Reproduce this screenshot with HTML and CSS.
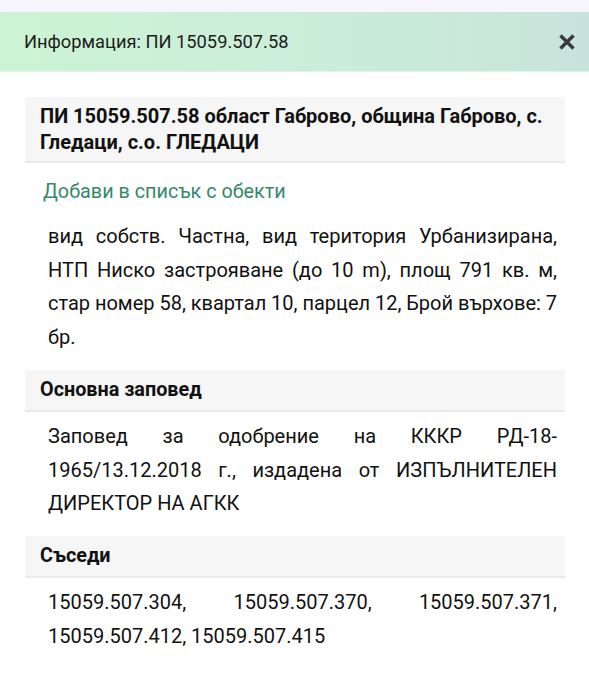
FILE: index.html
```html
<!DOCTYPE html>
<html lang="bg">
<head>
<meta charset="utf-8">
<link rel="stylesheet" href="styles.css">
</head>
<body>
<div class="topstrip"></div>
<header class="bar">
  <span class="bar-title">Информация: ПИ 15059.507.58</span>
  <svg class="close" width="18" height="18" viewBox="0 0 18 18"><path d="M2.5 2.5 L15.5 15.5 M15.5 2.5 L2.5 15.5" stroke="#3a3a3a" stroke-width="3.4" stroke-linecap="butt"/></svg>
</header>
<main class="content">
  <section class="card">
    <h2 class="card-title">ПИ 15059.507.58 област Габрово, община Габрово, с. Гледаци, с.о. ГЛЕДАЦИ</h2>
    <a class="link">Добави в списък с обекти</a>
    <p class="text text-tight">вид собств. Частна, вид територия Урбанизирана, НТП Ниско застрояване (до 10 m), площ 791 кв. м, стар номер 58, квартал 10, парцел 12, Брой върхове: 7 бр.</p>
  </section>
  <section class="card">
    <h3 class="sec-title">Основна заповед</h3>
    <p class="text">Заповед за одобрение на КККР РД-18-1965/13.12.2018 г., издадена от ИЗПЪЛНИТЕЛЕН ДИРЕКТОР НА АГКК</p>
  </section>
  <section class="card">
    <h3 class="sec-title">Съседи</h3>
    <p class="text">15059.507.304, 15059.507.370, 15059.507.371, 15059.507.412, 15059.507.415</p>
  </section>
</main>
</body>
</html>
```
FILE: styles.css
```css
html, body {
  margin: 0;
  padding: 0;
  background: #ffffff;
  font-family: Roboto, "Noto Sans", sans-serif;
  color: #111111;
}
.topstrip {
  height: 12px;
  background: #f6f5fb;
}
.bar {
  height: 59px;
  display: flex;
  align-items: center;
  justify-content: space-between;
  padding: 0 13px 0 24px;
  background: linear-gradient(90deg, #ccf3d4 0%, #cbeed8 50%, #c8e3dc 100%);
  border-bottom: 1px solid #e3f3e8;
}
.bar-title {
  font-size: 18.3px;
  color: #1d1d1d;
}
.close {
  display: block;
}
.content {
  padding: 25px 24px 0 25px;
}
.card {
  margin: 0;
}
.card-title {
  margin: 0;
  padding: 6px 15px;
  font-size: 20px;
  line-height: 26px;
  font-weight: 700;
  background: #f6f6f6;
  border-bottom: 2px solid #e9e9e9;
}
.link {
  display: block;
  margin: 14px 0 0 18px;
  font-size: 19.8px;
  line-height: 30px;
  color: #348a68;
}
.text {
  margin: 13px 8px 0 23px;
  font-size: 20px;
  line-height: 33.7px;
  text-align: justify;
}
.text-tight {
  word-spacing: -1px;
}
.sec-title {
  margin: 15px 0 0;
  padding: 0 15px;
  height: 40px;
  line-height: 40px;
  font-size: 19.8px;
  font-weight: 700;
  background: #f6f6f6;
  border-bottom: 2px solid #e9e9e9;
}
.card + .card .text {
  margin-top: 8px;
}
```
